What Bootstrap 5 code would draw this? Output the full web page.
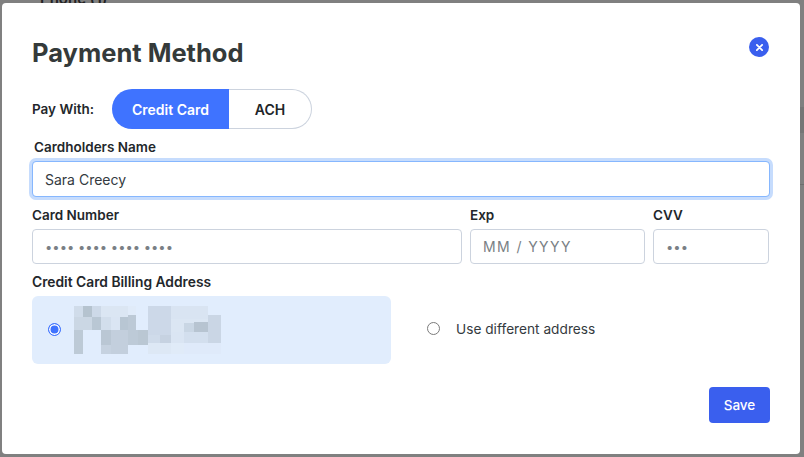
<!DOCTYPE html>
<html lang="en">
<head>
<meta charset="utf-8">
<title>Payment Method</title>
<link href="https://cdn.jsdelivr.net/npm/bootstrap@5.3.0/dist/css/bootstrap.min.css" rel="stylesheet">
<style>
html,body{height:457px;overflow:hidden;}
body{background-color:#808080;background-image:linear-gradient(#767676,#767676),linear-gradient(#6e6e6e,#6e6e6e);background-size:4px 26px,4px 1px;background-position:800px 107px,800px 184px;background-repeat:no-repeat;font-family:"Inter","Liberation Sans",sans-serif;color:#212529;}
.backdrop-strip{height:3px;overflow:hidden;font-size:15px;font-weight:600;line-height:1;color:#222;}
.strip-cell{margin-left:25px;width:339px;height:3px;padding-left:14px;border-left:1px solid #6e6e6e;border-right:1px solid #6e6e6e;}
.strip-cell span{display:block;margin-top:-9px;}
.pay-modal{margin-left:2px;width:798px;height:451px;background:#fff;border-radius:4px;padding:34px 30px 0;}
.pay-title{font-size:25.5px;font-weight:700;line-height:32px;color:#343a3a;margin:0;}
.pay-close{width:20px;height:20px;border:0;padding:0;border-radius:50%;background:#3a5fee;margin-right:1px;}
.pay-row{margin-top:20px;height:40px;}
.pay-label{font-size:13.5px;font-weight:600;color:#23272b;margin:0;line-height:16px;}
.pay-with{width:80px;}
.toggle-on,.toggle-off{font-size:14px;font-weight:600;height:40px;display:flex;align-items:center;justify-content:center;padding:0;}
.toggle-on{width:117px;background:#3f73ff;color:#fff;border:0;border-radius:20px 0 0 20px;}
.toggle-off{width:83px;background:#fff;color:#212529;border:1px solid #ccd3de;border-left:0;border-radius:0 20px 20px 0;}
.pay-input{height:35px;border:1px solid #ccd3de;border-radius:4px;font-size:14px;padding:0 12px;color:#343a40;box-shadow:none;}
.pay-input::placeholder{color:#7a7f85;}
.dots-input::placeholder{font-size:13px;}
.exp-input::placeholder{letter-spacing:1.4px;}
.name-input{height:36px;border-color:#86b7fe;box-shadow:0 0 0 3px #c6dcfd;}
.name-label{padding-left:2px;margin-top:10px;height:17px;}
.name-wrap{margin-top:5px;}
.card-row{margin-top:9px;}
.field-gap{height:18px;padding-top:1px;margin-bottom:5px;}
.col-card{width:430px;}.col-exp{width:175px;}.col-cvv{width:116px;}
.billing-label{margin-top:10px;font-size:13.8px;}
.billing-row{margin-top:6px;}
.billing-box{width:359px;height:68px;background:#e1edfd;border-radius:6px;padding-left:16px;}
.billing-svg{display:block;margin:10px 0 0 13px;}
.pay-radio{width:13px;height:13px;margin:0;flex:none;}
.radio-on{appearance:none;border:1px solid #3f73ff;border-radius:50%;background:#3f73ff;box-shadow:inset 0 0 0 1.5px #fff;margin-bottom:2px;}
.radio-off{appearance:none;border:1px solid #7b7b7b;border-radius:50%;background:#fff;}
.other-address{margin-left:36px;margin-bottom:2px;font-size:13.7px;color:#343a40;gap:16px;}
.save-row{margin-top:23px;}
.pay-save{width:61px;height:36px;background:#3a5fee;color:#fff;border:0;border-radius:4px;font-size:13.5px;font-weight:500;padding:0;}
</style>
</head>
<body>
<div class="backdrop-strip"><div class="strip-cell"><span>Phone (1)</span></div></div>
<div class="pay-modal">
  <div class="d-flex justify-content-between align-items-start">
    <h1 class="pay-title">Payment Method</h1>
    <button class="pay-close d-flex align-items-center justify-content-center" type="button" aria-label="Close">
      <svg width="7" height="7" viewBox="0 0 8 8"><path d="M1 1l6 6M7 1L1 7" stroke="#fff" stroke-width="2" stroke-linecap="round"/></svg>
    </button>
  </div>
  <div class="pay-row d-flex align-items-center">
    <span class="pay-label pay-with">Pay With:</span>
    <div class="d-flex">
      <button class="toggle-on" type="button">Credit Card</button>
      <button class="toggle-off" type="button">ACH</button>
    </div>
  </div>
  <div class="pay-label name-label">Cardholders Name</div>
  <div class="name-wrap"><input class="form-control pay-input name-input" type="text" value="Sara Creecy"></div>
  <div class="card-row d-flex gap-2">
    <div class="col-card"><div class="pay-label field-gap">Card Number</div><input class="form-control pay-input dots-input" placeholder="•••• •••• •••• ••••"></div>
    <div class="col-exp"><div class="pay-label field-gap">Exp</div><input class="form-control pay-input exp-input" placeholder="MM / YYYY"></div>
    <div class="col-cvv"><div class="pay-label field-gap">CVV</div><input class="form-control pay-input dots-input" placeholder="•••"></div>
  </div>
  <div class="pay-label billing-label">Credit Card Billing Address</div>
  <div class="billing-row d-flex align-items-center">
    <div class="billing-box d-flex align-items-center">
      <input class="pay-radio radio-on" type="radio" name="addr" checked>
      <svg class="billing-svg align-self-start" width="147" height="48" viewBox="42 33 441 144" aria-hidden="true">
        <g shape-rendering="crispEdges">
        <rect x="42" y="33" width="27" height="33" fill="#d0dcea"/><rect x="69" y="33" width="27" height="33" fill="#b5c3cf"/><rect x="96" y="33" width="27" height="33" fill="#cdd9e8"/><rect x="123" y="33" width="81" height="33" fill="#dbe6f3"/><rect x="204" y="33" width="24" height="27" fill="#e0ebf9"/><rect x="264" y="33" width="69" height="87" fill="#ccd8e8"/><rect x="333" y="33" width="111" height="39" fill="#d9e4f2"/>
        <rect x="42" y="66" width="54" height="39" fill="#cbd7e4"/><rect x="96" y="66" width="27" height="39" fill="#b9c7d4"/><rect x="123" y="66" width="30" height="39" fill="#d2deec"/><rect x="153" y="66" width="27" height="39" fill="#dae5f3"/><rect x="180" y="66" width="24" height="39" fill="#b8c6d3"/><rect x="204" y="60" width="24" height="45" fill="#bcc9d6"/>
        <rect x="333" y="72" width="39" height="39" fill="#dbe6f3"/><rect x="372" y="72" width="72" height="12" fill="#dbe6f3"/><rect x="372" y="84" width="30" height="27" fill="#c9d6e4"/><rect x="402" y="81" width="42" height="30" fill="#b7c4d1"/><rect x="444" y="60" width="39" height="84" fill="#cad6e5"/>
        <rect x="42" y="105" width="27" height="72" fill="#bdcad6"/><rect x="123" y="105" width="30" height="45" fill="#bac7d4"/><rect x="153" y="105" width="51" height="72" fill="#c3cfdd"/><rect x="204" y="105" width="30" height="45" fill="#bdcad7"/><rect x="234" y="105" width="30" height="45" fill="#bac7d3"/><rect x="264" y="120" width="36" height="24" fill="#cfdbea"/><rect x="300" y="120" width="33" height="24" fill="#c6d2e1"/><rect x="333" y="111" width="39" height="33" fill="#dae5f3"/><rect x="372" y="111" width="72" height="33" fill="#d3dfee"/>
        <rect x="123" y="150" width="30" height="27" fill="#c6d2e0"/><rect x="264" y="144" width="69" height="33" fill="#dde8f5"/><rect x="333" y="144" width="39" height="33" fill="#e0ebf8"/><rect x="372" y="144" width="111" height="33" fill="#dfeafa"/>
        </g>
      </svg>
    </div>
    <label class="other-address d-flex align-items-center"><input class="pay-radio radio-off" type="radio" name="addr">Use different address</label>
  </div>
  <div class="save-row d-flex justify-content-end"><button class="pay-save" type="button">Save</button></div>
</div>
<script src="https://cdn.jsdelivr.net/npm/bootstrap@5.3.0/dist/js/bootstrap.bundle.min.js"></script>
</body>
</html>
